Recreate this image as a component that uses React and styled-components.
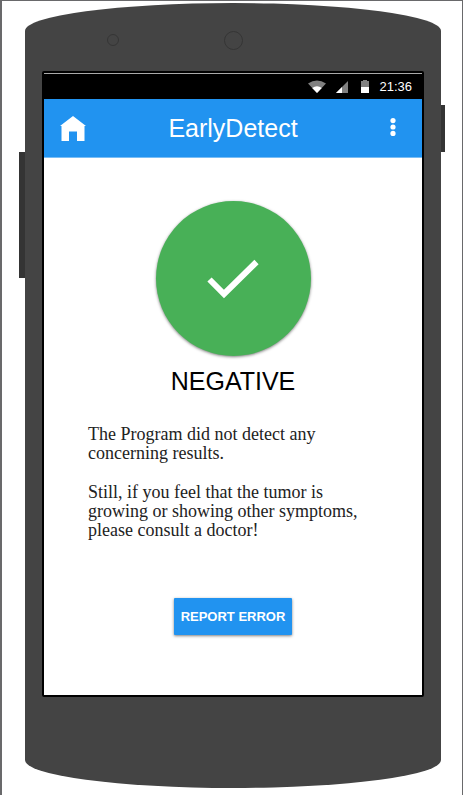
import React from "react";
import styled, { createGlobalStyle } from "styled-components";

const GlobalStyle = createGlobalStyle`
  *, *::before, *::after { box-sizing: border-box; }
  body { margin: 0; background: #fff; font-family: "Liberation Sans", Arial, sans-serif; }
`;

const Page = styled.div`
  display: flow-root;
  min-height: 100vh;
  border: solid #69696b;
  border-width: 1px 1px 0 2px;
  padding: 2px 21px 6px 23px;
  background: #fff;
`;

const Phone = styled.div`
  position: relative;
  display: flex;
  flex-direction: column;
  padding: 0 17px 91px;
  background: #444;
  border-radius: 50% / 28px;
`;

const SideButton = styled.div`
  position: absolute;
  top: ${(p) => p.$top}px;
  height: ${(p) => p.$height}px;
  width: ${(p) => p.$width}px;
  ${(p) => p.$side}: -${(p) => p.$width}px;
  background: #343434;
`;

const Earpiece = styled.div`
  display: grid;
  grid-template-columns: 9fr 16fr auto 25fr;
  align-items: center;
  height: 68px;
  padding-top: 6px;
`;

const Lens = styled.span`
  width: ${(p) => p.$size}px;
  height: ${(p) => p.$size}px;
  border: 1px solid #353535;
  border-radius: 50%;
`;

const Screen = styled.div`
  display: flex;
  flex-direction: column;
  border: 2px solid #000;
  border-radius: 2px;
  background: #fff;
`;

const StatusBar = styled.div`
  display: flex;
  align-items: center;
  justify-content: flex-end;
  height: 26px;
  padding-right: 10px;
  border-top: 1px solid #aaa;
  background: #000;
  color: #fff;
`;

const StatusIcon = styled.svg`
  display: block;
  flex: none;
  margin-right: ${(p) => p.$gap}px;
`;

const Clock = styled.time`
  font-size: 13px;
  line-height: 16px;
`;

const AppBar = styled.header`
  display: grid;
  grid-template-columns: 1fr auto 1fr;
  align-items: center;
  height: 59px;
  padding: 0 15px;
  background: #2193f0;
  border-bottom: 1px solid #79bdf5;
  color: #fff;
`;

const IconButton = styled.button`
  display: grid;
  place-items: center;
  width: 28px;
  height: 36px;
  padding: 0;
  border: 0;
  background: none;
  color: inherit;
  justify-self: ${(p) => p.$align};
  cursor: pointer;
`;

const Title = styled.h1`
  margin: 0;
  font-size: 25px;
  line-height: 28px;
  font-weight: 400;
`;

const Content = styled.main`
  display: flex;
  flex-direction: column;
  align-items: center;
  padding: 43px 44px 60px;
`;

const ResultBadge = styled.div`
  display: grid;
  place-items: center;
  width: 155px;
  height: 155px;
  border-radius: 50%;
  background: #48b057;
  box-shadow: 0 1px 3px rgba(0, 0, 0, 0.5);
`;

const ResultTitle = styled.h2`
  margin: 11px 0 0;
  font-size: 25px;
  line-height: 28px;
  font-weight: 400;
  color: #000;
`;

const Message = styled.div`
  align-self: stretch;
  display: flex;
  flex-direction: column;
  gap: 20px;
  margin-top: 30px;
  font-family: Georgia, "Liberation Serif", serif;
  font-size: 18px;
  line-height: 19px;
  color: #222;
`;

const Paragraph = styled.p`
  margin: 0;
`;

const ReportButton = styled.button`
  height: 37px;
  margin-top: 58px;
  padding: 0 7px;
  border: 0;
  border-radius: 1px;
  background: #2193f0;
  box-shadow: 0 1px 3px rgba(0, 0, 0, 0.5);
  color: #fff;
  font-family: inherit;
  font-size: 13px;
  line-height: 16px;
  font-weight: 700;
  cursor: pointer;
`;

export default function App() {
  return (
    <>
      <GlobalStyle />
      <Page>
        <Phone>
          <SideButton $side="left" $top={149} $height={126} $width={6} />
          <SideButton $side="right" $top={102} $height={47} $width={4} />
          <Earpiece>
            <span />
            <Lens $size={12} />
            <Lens $size={19} />
          </Earpiece>
          <Screen>
            <StatusBar>
              <StatusIcon $gap={10} width="18" height="13" viewBox="0 0 18 13" aria-hidden="true">
                <path d="M0 3.500Q9-2.500 18 3.500L9 13Z" fill="#808080" />
                <path d="M4.200 8Q9 4.500 13.800 8L9 13Z" fill="#fff" />
              </StatusIcon>
              <StatusIcon $gap={13} width="12" height="12" viewBox="0 0 12 12" aria-hidden="true">
                <path d="M12 0V12H0Z" fill="#808080" />
                <path d="M6 6V12H0Z" fill="#fff" />
              </StatusIcon>
              <StatusIcon $gap={10} width="8" height="13" viewBox="0 0 8 13" aria-hidden="true">
                <path d="M0 1H2V0H6V1H8V7H0Z" fill="#808080" />
                <path d="M0 7H8V13H0Z" fill="#fff" />
              </StatusIcon>
              <Clock>21:36</Clock>
            </StatusBar>
            <AppBar>
              <IconButton type="button" aria-label="Home" $align="start">
                <svg width="26" height="25" viewBox="0 0 26 25" aria-hidden="true">
                  <path d="M13 0L26 10H24.500V25H17V15.500H9V25H1.500V10H0Z" fill="currentColor" />
                </svg>
              </IconButton>
              <Title>EarlyDetect</Title>
              <IconButton type="button" aria-label="More options" $align="end">
                <svg width="6" height="20" viewBox="0 0 6 20" aria-hidden="true">
                  <circle cx="3" cy="2.600" r="2.600" fill="currentColor" />
                  <circle cx="3" cy="9" r="2.600" fill="currentColor" />
                  <circle cx="3" cy="15.400" r="2.600" fill="currentColor" />
                </svg>
              </IconButton>
            </AppBar>
            <Content>
              <ResultBadge>
                <svg width="52" height="40" viewBox="0 0 52 40" aria-hidden="true">
                  <path d="M2.500 20.500L17 35L49.500 3" fill="none" stroke="#fff" strokeWidth="6" />
                </svg>
              </ResultBadge>
              <ResultTitle>NEGATIVE</ResultTitle>
              <Message>
                <Paragraph>
                  The Program did not detect any
                  <br />
                  concerning results.
                </Paragraph>
                <Paragraph>
                  Still, if you feel that the tumor is
                  <br />
                  growing or showing other symptoms,
                  <br />
                  please consult a doctor!
                </Paragraph>
              </Message>
              <ReportButton type="button">REPORT ERROR</ReportButton>
            </Content>
          </Screen>
        </Phone>
      </Page>
    </>
  );
}
